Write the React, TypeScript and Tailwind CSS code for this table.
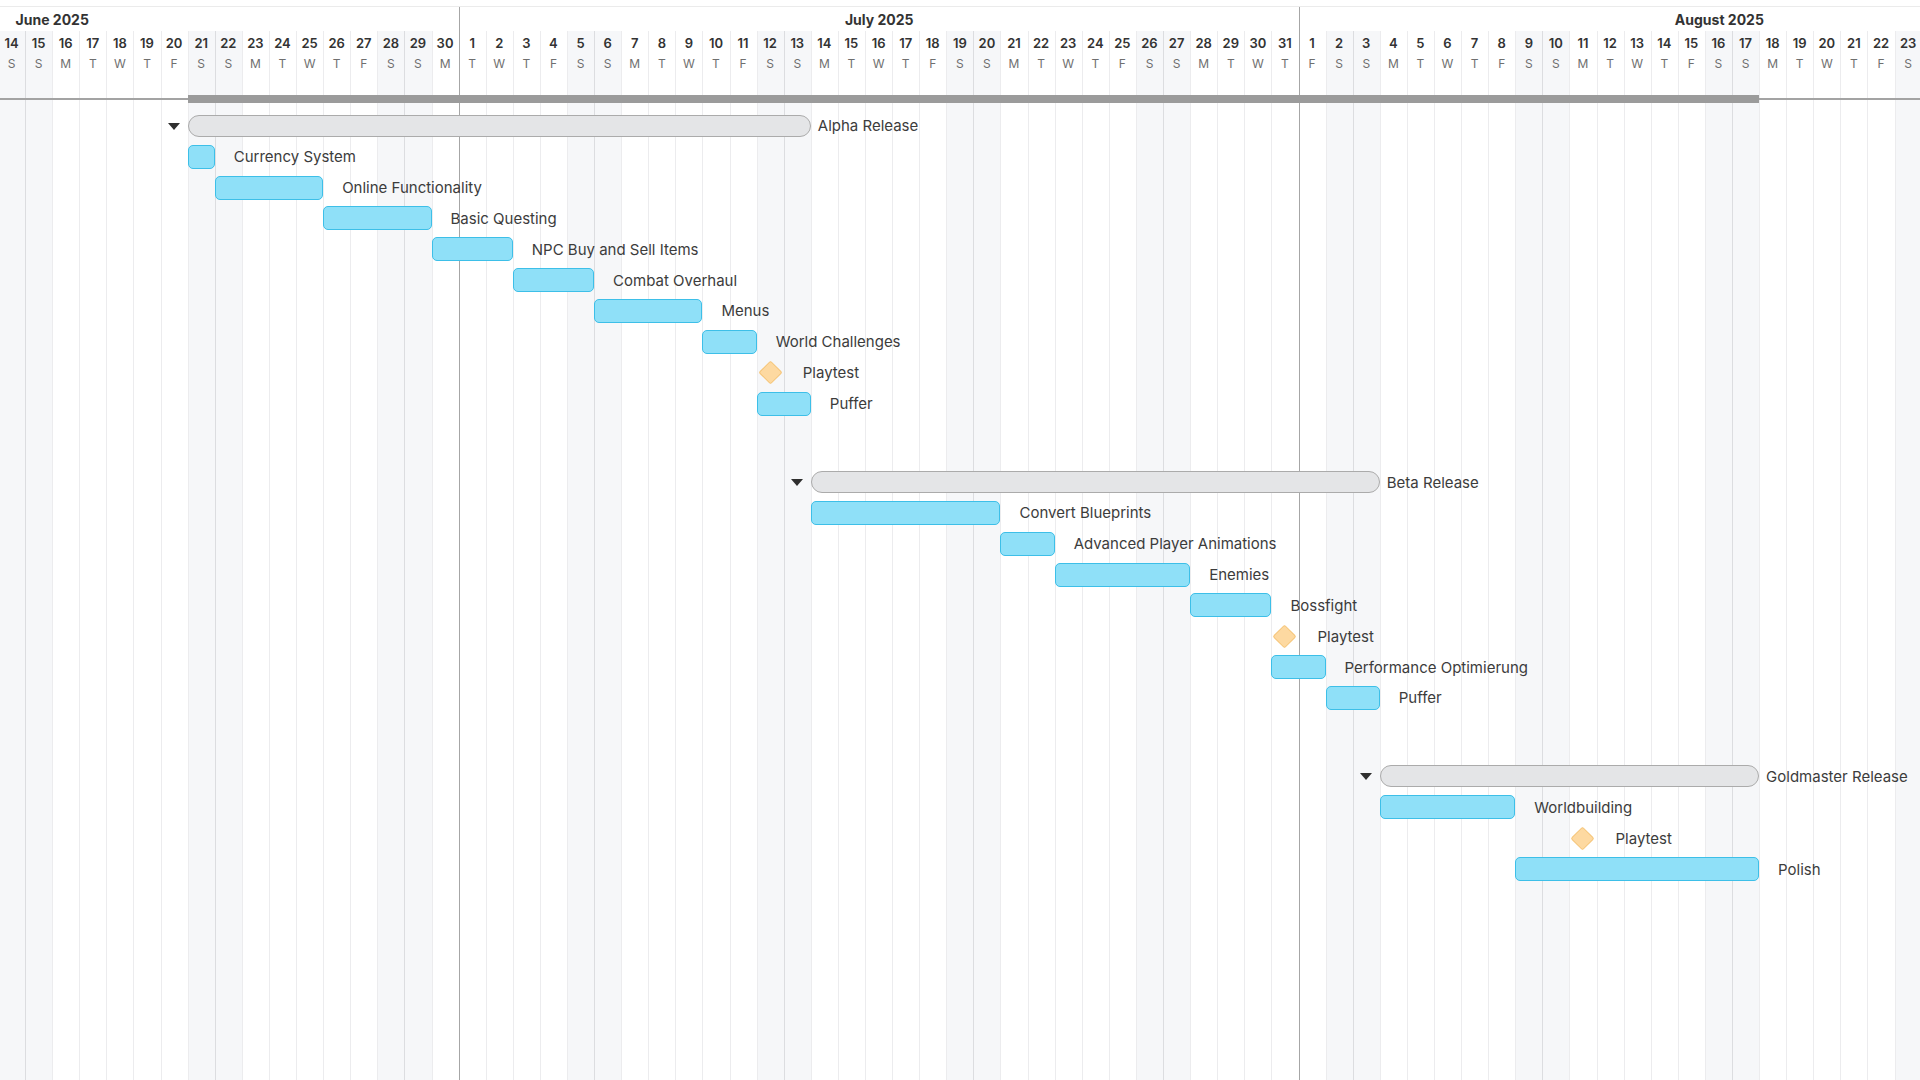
import React from 'react';

type Item =
  | { kind: 'summary'; name: string; start: number; len: number }
  | { kind: 'task'; name: string; start: number; len: number }
  | { kind: 'milestone'; name: string; start: number };

const DAYS = 71;
// index 0 is Saturday, June 14 2025
const LETTERS = ['S', 'S', 'M', 'T', 'W', 'T', 'F'];

const days = Array.from({ length: DAYS }, (_, i) => {
  const num = i < 17 ? 14 + i : i < 48 ? i - 16 : i - 47;
  return {
    num,
    letter: LETTERS[i % 7],
    weekend: i % 7 < 2,
    sunday: i % 7 === 1,
    first: num === 1,
  };
});

const groups: Item[][] = [
  [
    { kind: 'summary', name: 'Alpha Release', start: 7, len: 23 },
    { kind: 'task', name: 'Currency System', start: 7, len: 1 },
    { kind: 'task', name: 'Online Functionality', start: 8, len: 4 },
    { kind: 'task', name: 'Basic Questing', start: 12, len: 4 },
    { kind: 'task', name: 'NPC Buy and Sell Items', start: 16, len: 3 },
    { kind: 'task', name: 'Combat Overhaul', start: 19, len: 3 },
    { kind: 'task', name: 'Menus', start: 22, len: 4 },
    { kind: 'task', name: 'World Challenges', start: 26, len: 2 },
    { kind: 'milestone', name: 'Playtest', start: 28 },
    { kind: 'task', name: 'Puffer', start: 28, len: 2 },
  ],
  [
    { kind: 'summary', name: 'Beta Release', start: 30, len: 21 },
    { kind: 'task', name: 'Convert Blueprints', start: 30, len: 7 },
    { kind: 'task', name: 'Advanced Player Animations', start: 37, len: 2 },
    { kind: 'task', name: 'Enemies', start: 39, len: 5 },
    { kind: 'task', name: 'Bossfight', start: 44, len: 3 },
    { kind: 'milestone', name: 'Playtest', start: 47 },
    { kind: 'task', name: 'Performance Optimierung', start: 47, len: 2 },
    { kind: 'task', name: 'Puffer', start: 49, len: 2 },
  ],
  [
    { kind: 'summary', name: 'Goldmaster Release', start: 51, len: 14 },
    { kind: 'task', name: 'Worldbuilding', start: 51, len: 5 },
    { kind: 'milestone', name: 'Playtest', start: 58 },
    { kind: 'task', name: 'Polish', start: 56, len: 9 },
  ],
];

const Row: React.FC<{ item: Item }> = ({ item }) => {
  const s = item.start + 1;
  return (
    <div className="grid h-[30.85px] grid-cols-[repeat(71,27.1px)] items-center">
      {item.kind === 'summary' && (
        <>
          <div
            className="row-start-1 mr-[8px] mt-[1px] h-0 w-0 justify-self-end border-x-[6px] border-t-[7px] border-x-transparent border-t-[#2f2f2f]"
            style={{ gridColumn: `${s - 1} / span 1` }}
          />
          <div
            className="row-start-1 h-[22px] rounded-full border-[1.5px] border-[#ababab] bg-[#e4e5e7]"
            style={{ gridColumn: `${s} / span ${item.len}` }}
          />
          <div
            className="row-start-1 whitespace-nowrap pl-[7px] text-[15px] leading-none text-[#3c3c3c]"
            style={{ gridColumn: `${s + item.len} / -1` }}
          >
            {item.name}
          </div>
        </>
      )}
      {item.kind === 'task' && (
        <>
          <div
            className="row-start-1 h-[24px] rounded-[5px] border border-[#3dbfe8] bg-[#8fe0f8]"
            style={{ gridColumn: `${s} / span ${item.len}` }}
          />
          <div
            className="row-start-1 whitespace-nowrap pl-[19px] text-[15px] leading-none text-[#3c3c3c]"
            style={{ gridColumn: `${s + item.len} / -1` }}
          >
            {item.name}
          </div>
        </>
      )}
      {item.kind === 'milestone' && (
        <>
          <div
            className="row-start-1 size-[17px] rotate-45 justify-self-center rounded-[2px] border border-[#f5c374] bg-[#fdd9a1]"
            style={{ gridColumn: `${s} / span 1` }}
          />
          <div
            className="row-start-1 whitespace-nowrap pl-[19px] text-[15px] leading-none text-[#3c3c3c]"
            style={{ gridColumn: `${s + 1} / -1` }}
          >
            {item.name}
          </div>
        </>
      )}
    </div>
  );
};

const App: React.FC = () => {
  return (
    <div className="relative h-[1080px] w-[1920px] overflow-hidden bg-white font-['Inter',sans-serif]">
      {/* day columns behind everything */}
      <div className="absolute bottom-0 left-[-2px] top-[31px] grid grid-cols-[repeat(71,27.1px)]">
        {days.map((d, i) => (
          <div
            key={i}
            className={`h-full border-l ${
              d.first ? 'border-[#a6a6a6]' : d.sunday ? 'border-[#dcdde0]' : 'border-[#ececee]'
            } ${d.weekend ? 'bg-[#f6f7f9]' : ''}`}
          />
        ))}
      </div>

      <div className="relative pt-[6px]">
        {/* months */}
        <div className="h-[25px] overflow-hidden border-t border-[#ebebeb]">
          <div className="ml-[-354.3px] flex h-full">
            <div className="flex w-[813px] shrink-0 items-center justify-center text-[14px] font-bold text-[#333]">
              June 2025
            </div>
            <div className="flex w-[840.1px] shrink-0 items-center justify-center border-l border-[#a6a6a6] text-[14px] font-bold text-[#333]">
              July 2025
            </div>
            <div className="flex w-[840.1px] shrink-0 items-center justify-center border-l border-[#a6a6a6] text-[14px] font-bold text-[#333]">
              August 2025
            </div>
          </div>
        </div>

        {/* days */}
        <div className="ml-[-2px] grid h-[67px] grid-cols-[repeat(71,27.1px)]">
          {days.map((d, i) => (
            <div key={i} className="flex flex-col items-center pt-[4px]">
              <span className="text-[13px] font-semibold leading-[16px] text-[#333]">{d.num}</span>
              <span className="mt-[5px] text-[12px] leading-[16px] text-[#6f6f6f]">{d.letter}</span>
            </div>
          ))}
        </div>

        {/* header bottom line with project span */}
        <div className="relative h-[2px] bg-[#a3a3a3]">
          <div className="absolute left-[-2px] top-[-3px] grid h-[8px] grid-cols-[repeat(71,27.1px)]">
            <div className="col-[8/span_58] bg-[#9b9b9b]" />
          </div>
        </div>

        {/* rows */}
        <div className="ml-[-2px] flex flex-col gap-[47.7px] pt-[10.5px]">
          {groups.map((g, gi) => (
            <div key={gi}>
              {g.map((item, ii) => (
                <Row key={ii} item={item} />
              ))}
            </div>
          ))}
        </div>
      </div>
    </div>
  );
};

export default App;
